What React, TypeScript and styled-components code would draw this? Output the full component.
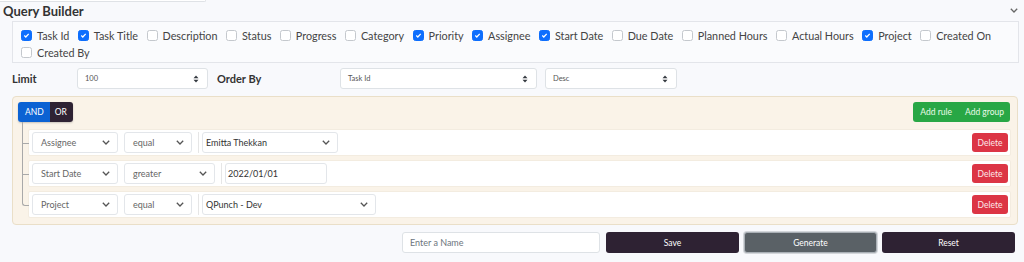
import React from 'react';
import styled, { createGlobalStyle } from 'styled-components';

const GlobalStyle = createGlobalStyle`
  html, body {
    margin: 0;
    padding: 0;
    background: #f8f9fc;
  }
  body {
    font-family: Lato, 'Liberation Sans', sans-serif;
    color: #444;
  }
`;

const columns: { name: string; checked: boolean }[] = [
  { name: 'Task Id', checked: true },
  { name: 'Task Title', checked: true },
  { name: 'Description', checked: false },
  { name: 'Status', checked: false },
  { name: 'Progress', checked: false },
  { name: 'Category', checked: false },
  { name: 'Priority', checked: true },
  { name: 'Assignee', checked: true },
  { name: 'Start Date', checked: true },
  { name: 'Due Date', checked: false },
  { name: 'Planned Hours', checked: false },
  { name: 'Actual Hours', checked: false },
  { name: 'Project', checked: true },
  { name: 'Created On', checked: false },
  { name: 'Created By', checked: false },
];

type Rule = {
  field: string;
  operator: string;
  operatorWidth: number;
  value: string;
  valueWidth: number;
  isInput?: boolean;
};

const rules: Rule[] = [
  { field: 'Assignee', operator: 'equal', operatorWidth: 68, value: 'Emitta Thekkan', valueWidth: 136 },
  { field: 'Start Date', operator: 'greater', operatorWidth: 91, value: '2022/01/01', valueWidth: 102, isInput: true },
  { field: 'Project', operator: 'equal', operatorWidth: 68, value: 'QPunch - Dev', valueWidth: 174 },
];

const SortArrows = () => (
  <svg width="6" height="8" viewBox="0 0 6 8">
    <path d="M3 0.5 L5.5 3.2 H0.5 Z" fill="#343a40" />
    <path d="M3 7.5 L5.5 4.8 H0.5 Z" fill="#343a40" />
  </svg>
);

const Chevron = ({ color = '#555' }: { color?: string }) => (
  <svg width="8" height="5" viewBox="0 0 8 5">
    <path d="M0.8 0.8 L4 4 L7.2 0.8" fill="none" stroke={color} strokeWidth="1.3" />
  </svg>
);

const CheckMark = () => (
  <svg width="7" height="7" viewBox="0 0 7 7">
    <path d="M1.3 3.6 L2.8 5 L5.7 1.9" fill="none" stroke="#fff" strokeWidth="1.3" />
  </svg>
);

export default function App() {
  return (
    <Page>
      <GlobalStyle />
      <TopStrip />
      <Header>
        <Title>Query Builder</Title>
        <CollapseIcon>
          <Chevron color="#666" />
        </CollapseIcon>
      </Header>
      <Body>
        <CheckPanel>
          {columns.map((c) => (
            <CheckItem key={c.name}>
              <Box checked={c.checked}>{c.checked && <CheckMark />}</Box>
              {c.name}
            </CheckItem>
          ))}
        </CheckPanel>

        <FilterRow>
          <FieldLabel width={65}>Limit</FieldLabel>
          <SortSelect width={131}>
            100
            <SortArrows />
          </SortSelect>
          <FieldLabel width={123} style={{ marginLeft: 9 }}>
            Order By
          </FieldLabel>
          <SortSelect width={197}>
            Task Id
            <SortArrows />
          </SortSelect>
          <SortSelect width={132} style={{ marginLeft: 8 }}>
            Desc
            <SortArrows />
          </SortSelect>
        </FilterRow>

        <Group>
          <GroupHeader>
            <Combinator>
              <CombinatorButton active>AND</CombinatorButton>
              <CombinatorButton>OR</CombinatorButton>
            </Combinator>
            <AddButtons>
              <AddButton>Add rule</AddButton>
              <AddButton>Add group</AddButton>
            </AddButtons>
          </GroupHeader>
          <RuleList>
            {rules.map((r, i) => (
              <RuleRow key={r.field} first={i === 0} last={i === rules.length - 1}>
                <RuleSelect width={86}>
                  {r.field}
                  <Chevron />
                </RuleSelect>
                <RuleSelect width={r.operatorWidth}>
                  {r.operator}
                  <Chevron />
                </RuleSelect>
                <Divider />
                {r.isInput ? (
                  <ValueInput width={r.valueWidth}>{r.value}</ValueInput>
                ) : (
                  <ValueSelect width={r.valueWidth}>
                    {r.value}
                    <Chevron />
                  </ValueSelect>
                )}
                <DeleteButton>Delete</DeleteButton>
              </RuleRow>
            ))}
          </RuleList>
        </Group>

        <ActionRow>
          <NameInput>Enter a Name</NameInput>
          <ActionButton>Save</ActionButton>
          <ActionButton variant="secondary">Generate</ActionButton>
          <ActionButton>Reset</ActionButton>
        </ActionRow>
      </Body>
    </Page>
  );
}

const Page = styled.div`
  width: 1024px;
  height: 262px;
  overflow: hidden;
  background: #f8f9fc;
`;

const TopStrip = styled.div`
  width: 205px;
  height: 1px;
  background: #fff;
  border-bottom: 1px solid #dfe2e6;
  border-right: 1px solid #dfe2e6;
  border-bottom-right-radius: 3px;
`;

const Header = styled.div`
  display: flex;
  align-items: center;
  justify-content: space-between;
  height: 19px;
  padding: 0 6px 0 3px;
`;

const Title = styled.div`
  font-size: 13px;
  font-weight: 700;
  color: #333;
  line-height: 17px;
`;

const CollapseIcon = styled.div`
  display: flex;
  align-items: center;
  margin-top: -3px;
`;

const Body = styled.div`
  padding-left: 12px;
  width: 1007px;
`;

const CheckPanel = styled.div`
  box-sizing: border-box;
  width: 1007px;
  border: 1px solid #e3e5ea;
  background: #fafbfd;
  padding: 5px 8px 1px;
  display: flex;
  flex-wrap: wrap;
  column-gap: 8.5px;
`;

const CheckItem = styled.label`
  display: flex;
  align-items: center;
  gap: 5px;
  font-size: 10.8px;
  line-height: 17px;
  color: #444;
`;

const Box = styled.span<{ checked: boolean }>`
  box-sizing: border-box;
  width: 11px;
  height: 11px;
  border-radius: 2.5px;
  border: 1px solid ${(p) => (p.checked ? '#0d6efd' : '#c4c8cd')};
  background: ${(p) => (p.checked ? '#0d6efd' : '#fff')};
  display: flex;
  align-items: center;
  justify-content: center;
`;

const FilterRow = styled.div`
  display: flex;
  align-items: center;
  margin-top: 5px;
  height: 21px;
`;

const FieldLabel = styled.div<{ width: number }>`
  width: ${(p) => p.width}px;
  font-size: 11px;
  font-weight: 700;
  color: #333;
`;

const SortSelect = styled.div<{ width: number }>`
  box-sizing: border-box;
  width: ${(p) => p.width}px;
  height: 21px;
  background: #fff;
  border: 1px solid #dee2e6;
  border-radius: 3px;
  padding: 0 8px 0 7px;
  display: flex;
  align-items: center;
  justify-content: space-between;
  font-size: 7.5px;
  color: #555;
`;

const Group = styled.div`
  box-sizing: border-box;
  width: 1006px;
  margin-top: 7px;
  background: #faf3e8;
  border: 1px solid #eadfc8;
  border-radius: 4px;
  padding: 5px 6px 6px 5px;
`;

const GroupHeader = styled.div`
  display: flex;
  align-items: center;
  justify-content: space-between;
`;

const Combinator = styled.div`
  display: flex;
  height: 20px;
  border-radius: 3px;
  overflow: hidden;
  box-shadow: 0 1px 2px rgba(0, 0, 0, 0.2);
`;

const CombinatorButton = styled.div<{ active?: boolean }>`
  display: flex;
  align-items: center;
  padding: 0 6px 0 ${(p) => (p.active ? 7 : 5)}px;
  font-size: 8.5px;
  color: #fff;
  background: ${(p) => (p.active ? '#0b62d3' : '#2e2233')};
`;

const AddButtons = styled.div`
  display: flex;
  height: 20px;
  margin-right: 1px;
  background: #28a745;
  border-radius: 3px;
`;

const AddButton = styled.div`
  display: flex;
  align-items: center;
  padding: 0 6px 0 7px;
  font-size: 8.5px;
  color: #eafbe9;
`;

const RuleList = styled.div`
  display: flex;
  flex-direction: column;
  gap: 4px;
  margin: 7px 0 0 10px;
`;

const RuleRow = styled.div<{ first: boolean; last: boolean }>`
  position: relative;
  box-sizing: border-box;
  height: 27px;
  background: #fff;
  border: 1px solid #f3ece0;
  border-radius: 2px;
  padding: 0 2px 0 3px;
  display: flex;
  align-items: center;

  &::before {
    content: '';
    position: absolute;
    left: -7px;
    top: ${(p) => (p.first ? -8 : -6)}px;
    width: 6px;
    height: ${(p) => (p.first ? 21 : 19)}px;
    border-left: 1px solid #a9a9a9;
    border-bottom: 1px solid #a9a9a9;
    border-bottom-left-radius: ${(p) => (p.last ? 3 : 0)}px;
  }

  &::after {
    content: '';
    display: ${(p) => (p.last ? 'none' : 'block')};
    position: absolute;
    left: -7px;
    top: 12px;
    height: 20px;
    border-left: 1px solid #a9a9a9;
  }
`;

const RuleSelect = styled.div<{ width: number }>`
  box-sizing: border-box;
  width: ${(p) => p.width}px;
  height: 21px;
  margin-right: 6px;
  background: #fff;
  border: 1px solid #e3e6ea;
  border-radius: 3px;
  padding: 0 7px 0 8px;
  display: flex;
  align-items: center;
  justify-content: space-between;
  font-size: 9px;
  color: #666;
`;

const Divider = styled.div`
  width: 1px;
  height: 21px;
  background: #e6e6e6;
  margin-right: 3px;
`;

const ValueSelect = styled(RuleSelect)`
  padding-left: 3px;
  color: #333;
`;

const ValueInput = styled.div<{ width: number }>`
  box-sizing: border-box;
  width: ${(p) => p.width}px;
  height: 21px;
  background: #fff;
  border: 1px solid #e3e6ea;
  border-radius: 3px;
  padding-left: 2px;
  display: flex;
  align-items: center;
  font-size: 9px;
  color: #333;
`;

const DeleteButton = styled.div`
  margin-left: auto;
  width: 36px;
  height: 19px;
  border-radius: 3px;
  background: #dc3545;
  color: #fde8ea;
  font-size: 8.5px;
  display: flex;
  align-items: center;
  justify-content: center;
`;

const ActionRow = styled.div`
  display: flex;
  justify-content: flex-end;
  gap: 5px;
  margin-top: 7px;
  padding-right: 4px;
`;

const NameInput = styled.div`
  box-sizing: border-box;
  width: 198px;
  height: 21px;
  margin-right: 1px;
  background: #fff;
  border: 1px solid #dee2e6;
  border-radius: 3px;
  padding-left: 7px;
  display: flex;
  align-items: center;
  font-size: 9px;
  color: #6c757d;
`;

const ActionButton = styled.div<{ variant?: 'secondary' }>`
  box-sizing: border-box;
  width: 133px;
  height: 21px;
  border-radius: 3px;
  background: ${(p) => (p.variant === 'secondary' ? '#5a6166' : '#2e2233')};
  border: ${(p) => (p.variant === 'secondary' ? '1px solid #aab0b6' : 'none')};
  box-shadow: ${(p) => (p.variant === 'secondary' ? '0 0 0 1px #d3d6da' : 'none')};
  color: #fff;
  font-size: 8.5px;
  display: flex;
  align-items: center;
  justify-content: center;
`;
